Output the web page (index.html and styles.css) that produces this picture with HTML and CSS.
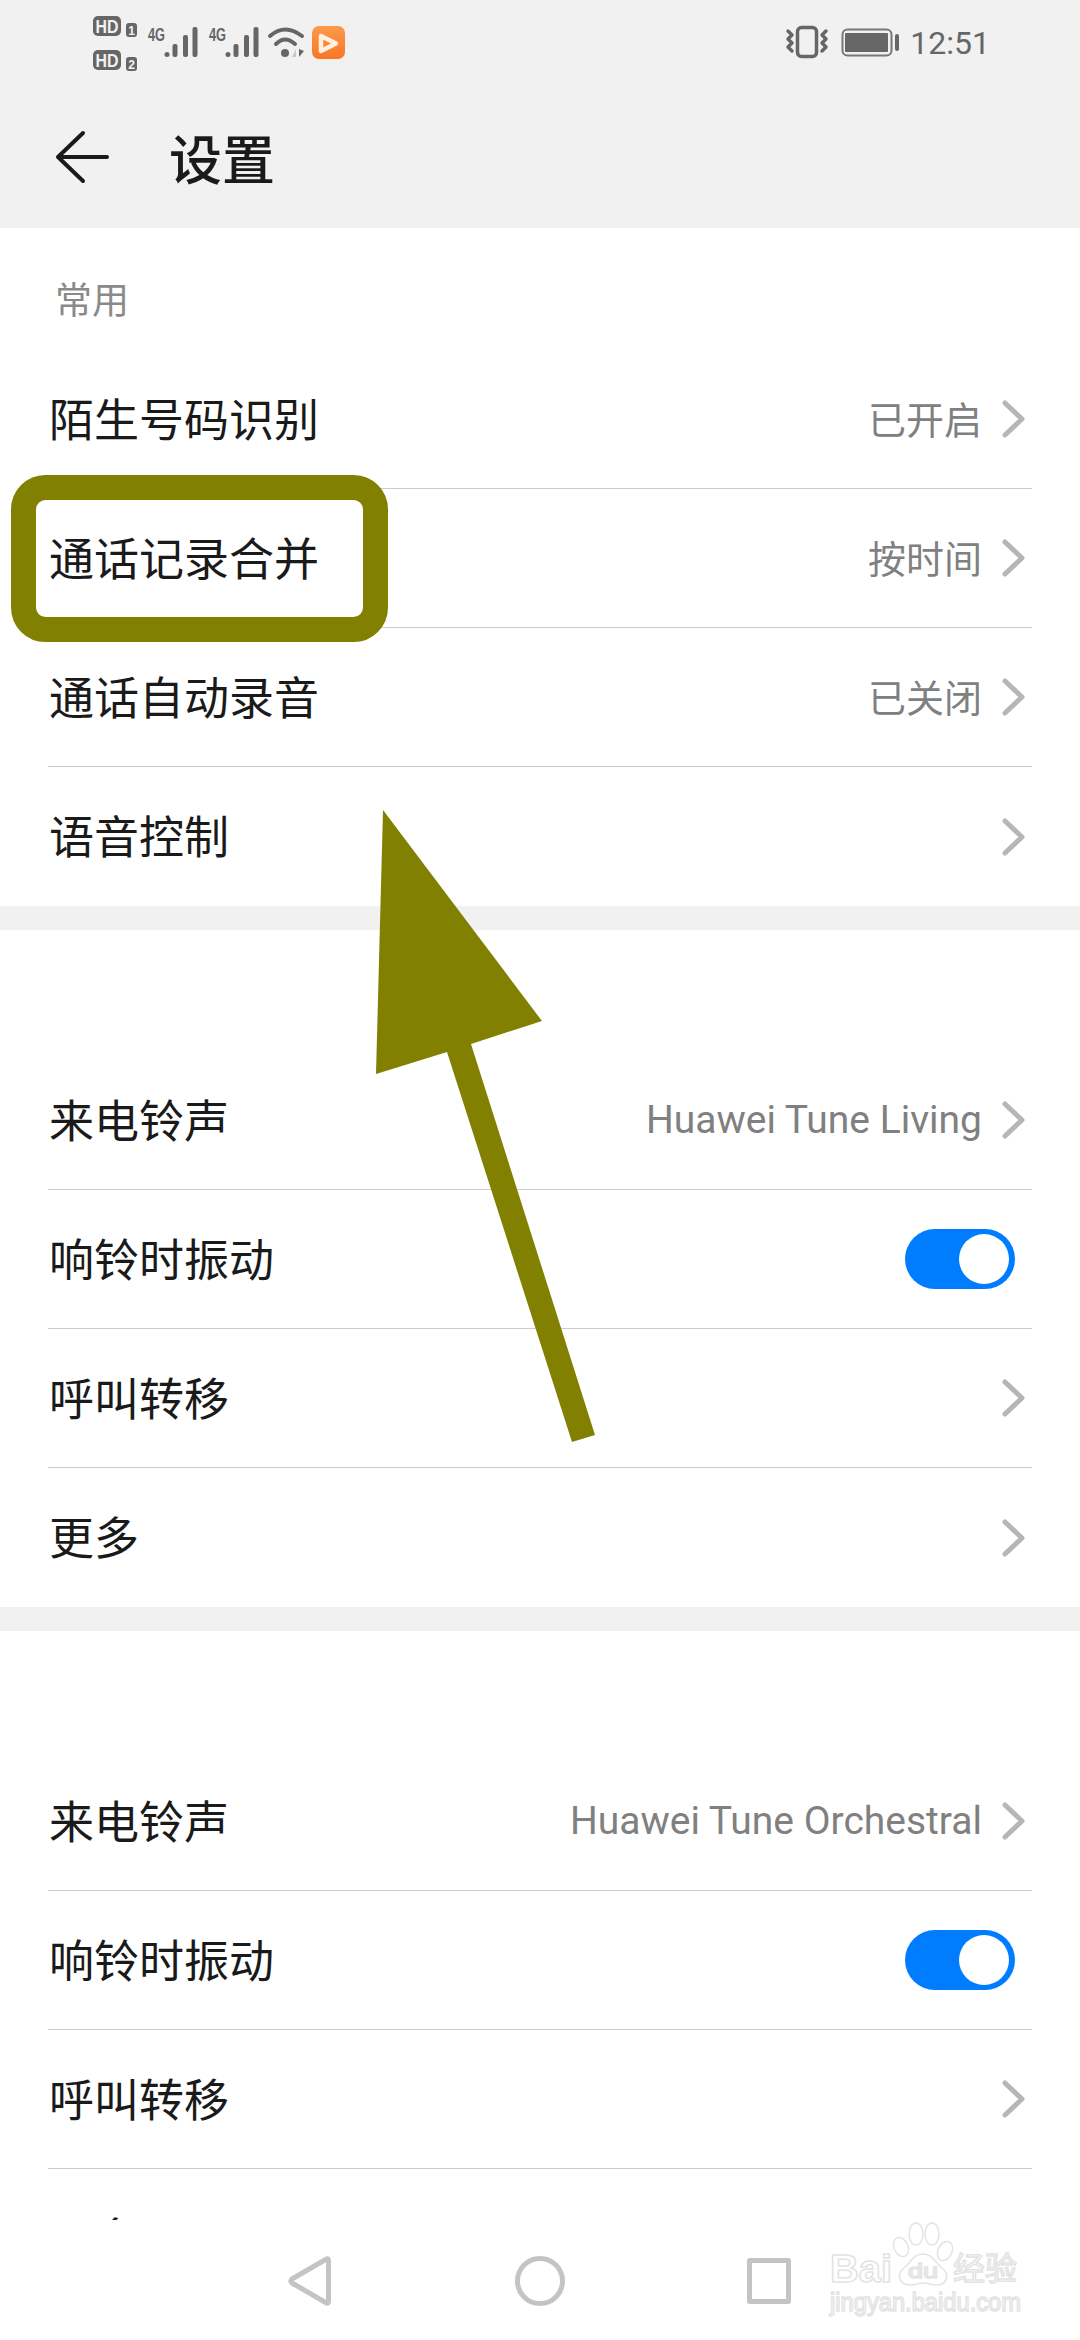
FILE: index.html
```html
<!DOCTYPE html>
<html lang="zh-CN">
<head>
    <meta charset="UTF-8">
    <meta name="viewport" content="width=device-width, initial-scale=1.0">
    <title>设置</title>
    <link rel="stylesheet" href="styles.css">
</head>
<body>
    <svg class="defs" width="0" height="0">
        <symbol id="chevron" viewBox="0 0 24 40">
            <polyline points="3,4 20,20 3,36" fill="none" stroke="#b6b6b6" stroke-width="5" stroke-linecap="round" stroke-linejoin="round"/>
        </symbol>
    </svg>

    <div class="page">
        <header class="top">
            <!-- Статус-бар -->
            <div class="status-bar">
                <svg class="status-left" viewBox="0 0 360 86">
                    <defs>
                        <linearGradient id="orange" x1="0" y1="0" x2="0" y2="1">
                            <stop offset="0" stop-color="#fb9a4b"/>
                            <stop offset="1" stop-color="#fa7526"/>
                        </linearGradient>
                    </defs>
                    <g fill="#666">
                        <rect x="93" y="16" width="28" height="20" rx="5"/>
                        <rect x="93" y="50" width="28" height="20" rx="5"/>
                        <rect x="126" y="23" width="11" height="14" rx="3"/>
                        <rect x="126" y="57" width="11" height="14" rx="3"/>
                    </g>
                    <g class="badge-text" fill="#f1f1f1">
                        <text x="107" y="32.500" text-anchor="middle" font-size="18" textLength="23" lengthAdjust="spacingAndGlyphs">HD</text>
                        <text x="107" y="66.500" text-anchor="middle" font-size="18" textLength="23" lengthAdjust="spacingAndGlyphs">HD</text>
                        <text x="131.500" y="34.500" text-anchor="middle" font-size="12">1</text>
                        <text x="131.500" y="68.500" text-anchor="middle" font-size="12">2</text>
                    </g>
                    <g class="badge-text" fill="#666">
                        <text x="148" y="41" font-size="18" textLength="17" lengthAdjust="spacingAndGlyphs">4G</text>
                        <text x="209" y="41" font-size="18" textLength="17" lengthAdjust="spacingAndGlyphs">4G</text>
                    </g>
                    <g fill="#666">
                        <circle cx="167" cy="54.500" r="2.500"/>
                        <rect x="172.500" y="44" width="5" height="13" rx="2"/>
                        <rect x="183" y="35" width="5" height="22" rx="2"/>
                        <rect x="192.500" y="27" width="5" height="30" rx="2"/>
                        <circle cx="228" cy="54.500" r="2.500"/>
                        <rect x="233.500" y="44" width="5" height="13" rx="2"/>
                        <rect x="244" y="35" width="5" height="22" rx="2"/>
                        <rect x="253.500" y="27" width="5" height="30" rx="2"/>
                    </g>
                    <g fill="none" stroke="#666" stroke-width="4" stroke-linecap="round">
                        <path d="M270 36 Q285 23 302 36"/>
                        <path d="M276 44 Q285 35 295 44"/>
                    </g>
                    <circle cx="285" cy="53" r="4" fill="#666"/>
                    <path d="M296 57 L296 49 L292 57 Z" fill="#c8c8c8"/>
                    <path d="M299 49 L299 57 L304 51 Z" fill="#666"/>
                    <rect x="312" y="26" width="33" height="33" rx="7" fill="url(#orange)"/>
                    <path d="M321 36 L336 43.500 L321 51 Z" fill="none" stroke="#fff1df" stroke-width="4.500" stroke-linejoin="round"/>
                </svg>
                <div class="status-right">
                    <svg class="status-icons" viewBox="782 0 120 86">
                        <rect x="797.500" y="27.500" width="19" height="29" rx="4" fill="none" stroke="#666" stroke-width="3.500"/>
                        <g fill="none" stroke="#666" stroke-width="3.500" stroke-linecap="round" stroke-linejoin="round">
                            <path d="M788 31 L792 35 L788 39 L792 43 L788 47 L792 51"/>
                            <path d="M826 31 L822 35 L826 39 L822 43 L826 47 L822 51"/>
                        </g>
                        <rect x="842.500" y="29.500" width="49" height="26" rx="5" fill="none" stroke="#777" stroke-width="2"/>
                        <rect x="845" y="33" width="43" height="19" rx="1" fill="#666"/>
                        <rect x="895" y="34" width="4" height="17" rx="2" fill="#666"/>
                    </svg>
                    <span class="time">12:51</span>
                </div>
            </div>

            <!-- Заголовок -->
            <div class="toolbar">
                <svg class="back" viewBox="0 0 54 54">
                    <path d="M28 3 L3 27 L28 51 M3 27 L52 27" fill="none" stroke="#1a1a1a" stroke-width="4" stroke-linecap="round" stroke-linejoin="round"/>
                </svg>
                <h1 class="title">设置</h1>
            </div>
        </header>

        <main class="content">
            <section class="group">
                <div class="group-label">常用</div>
                <div class="row">
                    <span class="row-name">陌生号码识别</span>
                    <span class="row-value">已开启</span>
                    <svg class="chevron"><use href="#chevron"/></svg>
                </div>
                <div class="row">
                    <span class="row-name">通话记录合并</span>
                    <span class="row-value">按时间</span>
                    <svg class="chevron"><use href="#chevron"/></svg>
                </div>
                <div class="row">
                    <span class="row-name">通话自动录音</span>
                    <span class="row-value">已关闭</span>
                    <svg class="chevron"><use href="#chevron"/></svg>
                </div>
                <div class="row">
                    <span class="row-name">语音控制</span>
                    <svg class="chevron"><use href="#chevron"/></svg>
                </div>
            </section>

            <section class="group group-spaced">
                <div class="row">
                    <span class="row-name">来电铃声</span>
                    <span class="row-value row-value-latin">Huawei Tune Living</span>
                    <svg class="chevron"><use href="#chevron"/></svg>
                </div>
                <div class="row">
                    <span class="row-name">响铃时振动</span>
                    <span class="switch"></span>
                </div>
                <div class="row">
                    <span class="row-name">呼叫转移</span>
                    <svg class="chevron"><use href="#chevron"/></svg>
                </div>
                <div class="row">
                    <span class="row-name">更多</span>
                    <svg class="chevron"><use href="#chevron"/></svg>
                </div>
            </section>

            <section class="group group-spaced">
                <div class="row">
                    <span class="row-name">来电铃声</span>
                    <span class="row-value row-value-latin">Huawei Tune Orchestral</span>
                    <svg class="chevron"><use href="#chevron"/></svg>
                </div>
                <div class="row">
                    <span class="row-name">响铃时振动</span>
                    <span class="switch"></span>
                </div>
                <div class="row">
                    <span class="row-name">呼叫转移</span>
                    <svg class="chevron"><use href="#chevron"/></svg>
                </div>
                <div class="row">
                    <span class="row-name">更多</span>
                    <svg class="chevron"><use href="#chevron"/></svg>
                </div>
            </section>
        </main>

        <!-- Навигация -->
        <nav class="nav-bar">
            <svg class="nav-icon nav-back" viewBox="0 0 44 52">
                <path d="M38.500 4 Q40.500 3 40.500 6 L40.500 46 Q40.500 49 38.500 48 L4 28 Q2 26 4 24 Z" fill="none" stroke="#c4c4c4" stroke-width="5" stroke-linejoin="round"/>
            </svg>
            <span class="nav-circle"></span>
            <span class="nav-square"></span>
        </nav>

        <!-- Пометки поверх скриншота -->
        <svg class="overlay" viewBox="0 0 1080 2340">
            <rect x="23.500" y="487.500" width="352" height="142" rx="22" fill="none" stroke="#828000" stroke-width="25"/>
            <polygon points="383,810 542,1021 471,1044 595,1435 572,1442 447,1052 376,1074" fill="#828000"/>
            <g class="watermark">
                <ellipse cx="901" cy="2247" rx="7" ry="10" transform="rotate(-25 901 2247)"/>
                <ellipse cx="916" cy="2234" rx="7" ry="11"/>
                <ellipse cx="932" cy="2234" rx="7" ry="11"/>
                <ellipse cx="945" cy="2251" rx="7" ry="10" transform="rotate(25 945 2251)"/>
                <path d="M923 2254 C913 2254 911 2263 904 2268 C896 2274 899 2285 910 2285 C916 2285 918 2283 923 2283 C928 2283 931 2285 937 2285 C947 2285 950 2274 942 2268 C935 2263 933 2254 923 2254 Z"/>
                <text class="wm-logo" x="830" y="2282" font-size="39" textLength="62" lengthAdjust="spacingAndGlyphs">Bai</text>
                <text class="wm-du" x="908" y="2278" font-size="21" textLength="30" lengthAdjust="spacingAndGlyphs">du</text>
                <text class="wm-cjk" x="953" y="2280" font-size="32">经验</text>
                <text class="wm-url" x="830" y="2311" font-size="26" textLength="191" lengthAdjust="spacingAndGlyphs">jingyan.baidu.com</text>
            </g>
        </svg>
    </div>
</body>
</html>
```

FILE: styles.css
```css
body {
    margin: 0;
    background-color: #fff;
    font-family: Roboto, "Noto Sans CJK SC", sans-serif;
}
.defs {
    display: block;
    height: 0;
}
.page {
    position: relative;
    display: flex;
    flex-direction: column;
    width: 1080px;
    height: 2340px;
    overflow: hidden;
}
.top {
    flex: none;
    height: 228px;
    background-color: #f1f1f1;
}
.status-bar {
    display: flex;
    justify-content: space-between;
    align-items: center;
    height: 86px;
    padding-right: 90px;
}
.status-left {
    width: 360px;
    height: 86px;
}
.status-right {
    display: flex;
    align-items: center;
    gap: 8px;
}
.status-icons {
    width: 120px;
    height: 86px;
}
.badge-text {
    font-family: "Liberation Sans", sans-serif;
    font-weight: 700;
}
.time {
    font-size: 32px;
    color: #666;
}
.toolbar {
    display: flex;
    align-items: center;
    gap: 60px;
    height: 142px;
    padding-left: 55px;
}
.back {
    width: 54px;
    height: 54px;
}
.title {
    margin: 0;
    font-size: 53px;
    font-weight: 500;
    color: #1a1a1a;
}
.content {
    flex: 1;
    min-height: 0;
    overflow: hidden;
}
.group + .group {
    border-top: 24px solid #f1f1f1;
}
.group-spaced {
    padding-top: 121px;
}
.group-label {
    height: 122px;
    padding: 49px 0 0 55px;
    box-sizing: border-box;
    font-size: 37px;
    line-height: 50px;
    color: #8a8a8a;
}
.row {
    display: flex;
    align-items: center;
    height: 139px;
    margin: 0 48px;
    padding: 0 6px 0 1px;
    box-sizing: border-box;
    border-bottom: 1px solid #cccccc;
}
.group .row:last-child {
    border-bottom: none;
}
.row-name {
    flex: 1;
    padding-bottom: 4px;
    font-size: 45px;
    color: #1a1a1a;
}
.row-value {
    padding-bottom: 4px;
    font-size: 38px;
    color: #808080;
}
.row-value-latin {
    padding-bottom: 0;
    font-size: 39px;
}
.chevron {
    flex: none;
    width: 24px;
    height: 40px;
    margin-left: 20px;
}
.switch {
    position: relative;
    width: 110px;
    height: 60px;
    margin-right: 11px;
    border-radius: 30px;
    background-color: #007dff;
}
.switch::after {
    content: "";
    position: absolute;
    top: 5px;
    right: 6px;
    width: 50px;
    height: 50px;
    border-radius: 50%;
    background-color: #fff;
}
.nav-bar {
    position: relative;
    flex: none;
    height: 120px;
    background-color: #fff;
}
.nav-icon {
    position: absolute;
}
.nav-back {
    left: 288px;
    top: 35px;
    width: 44px;
    height: 52px;
}
.nav-circle {
    position: absolute;
    left: 515px;
    top: 36px;
    width: 50px;
    height: 50px;
    box-sizing: border-box;
    border: 5px solid #c4c4c4;
    border-radius: 50%;
}
.nav-square {
    position: absolute;
    left: 747px;
    top: 38px;
    width: 44px;
    height: 46px;
    box-sizing: border-box;
    border: 5px solid #c4c4c4;
    border-radius: 3px;
}
.overlay {
    position: absolute;
    top: 0;
    left: 0;
    width: 1080px;
    height: 2340px;
    pointer-events: none;
}
.watermark {
    fill: #fff;
    stroke: #e3e3e3;
    stroke-width: 1.500;
    font-family: "Liberation Sans", sans-serif;
}
.wm-cjk {
    font-family: "Noto Sans CJK SC", sans-serif;
}
.wm-logo {
    font-weight: 700;
}
```
